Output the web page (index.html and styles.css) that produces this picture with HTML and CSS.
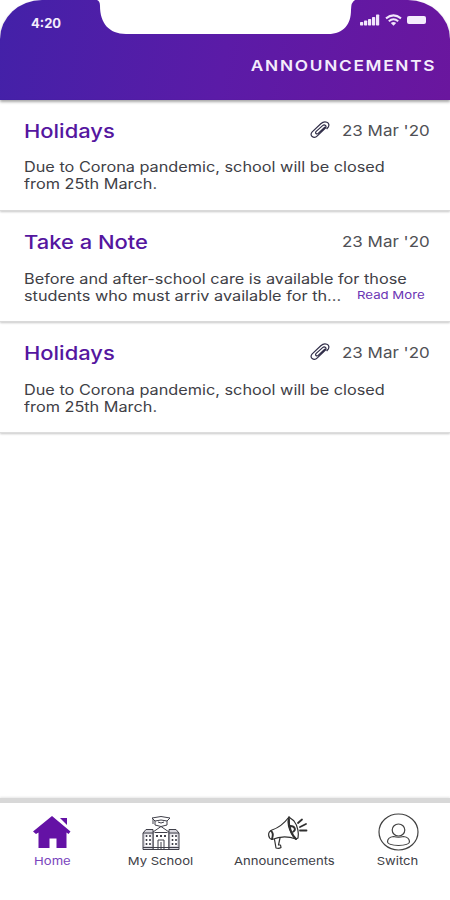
FILE: index.html
```html
<!DOCTYPE html>
<html lang="en">
<head>
  <meta charset="UTF-8">
  <title>Announcements</title>
  <link rel="stylesheet" href="styles.css">
</head>
<body>

  <!-- Header -->
  <header class="header">
    <svg class="notch" width="258" height="34" viewBox="0 0 258 34">
      <path d="M0 0 Q3 1 3 6 C3 23 12 34 29 34 H231 C247 34 254 24 254 10 Q254 2 258 0 Z" fill="#fff"/>
    </svg>
    <div class="status-bar">
      <span class="time">4:20</span>
      <div class="status-icons">
        <svg width="20" height="12" viewBox="0 0 20 12" fill="#f1e6fb">
          <rect x="0" y="8" width="3.2" height="3.5" rx=".7"/>
          <rect x="4" y="6.5" width="3.2" height="5" rx=".7"/>
          <rect x="8" y="5" width="3.2" height="6.5" rx=".7"/>
          <rect x="12" y="3" width="3.2" height="8.5" rx=".7"/>
          <rect x="16" y="0.5" width="3.2" height="11" rx=".7"/>
        </svg>
        <svg width="17" height="12" viewBox="0 0 17 12" fill="none" stroke="#f1e6fb" stroke-width="2">
          <path d="M1 4.4 Q8.5 -1.6 16 4.4"/>
          <path d="M3.8 7.3 Q8.5 3.2 13.2 7.3"/>
          <path d="M5.8 9 Q8.5 6.8 11.2 9 L8.5 11.8 Z" fill="#f1e6fb" stroke="none"/>
        </svg>
        <span class="battery"></span>
      </div>
    </div>
    <h1><span>ANNOUNCEMENTS</span></h1>
  </header>

  <!-- Announcement list -->
  <main>
    <article class="card">
      <div class="card-head">
        <h2>Holidays</h2>
        <svg class="clip" width="20" height="18" viewBox="0 0 20 18">
          <path d="M15 6 L8.2 12.4 C6.6 13.8 4.6 12 6.2 10.4 L12.6 4.6 C14.8 2.8 17.2 5.2 15.2 7.4 L7.6 14.6 C3.8 18.4 -1.2 14.6 2.2 10.8 L10.8 2.8 C14.6 -.8 20.6 1.4 18.4 5.8 L16.6 8"/>
        </svg>
        <span class="date">23 Mar '20</span>
      </div>
      <p><span class="line">Due to Corona pandemic, school will be closed</span><span class="line">from 25th March.</span></p>
    </article>

    <article class="card">
      <div class="card-head">
        <h2>Take a Note</h2>
        <span class="date">23 Mar '20</span>
      </div>
      <p class="low"><span class="line">Before and after-school care is available for those</span><span class="line">students who must arriv available for th...</span></p>
      <a class="read-more">Read More</a>
    </article>

    <article class="card">
      <div class="card-head">
        <h2>Holidays</h2>
        <svg class="clip" width="20" height="18" viewBox="0 0 20 18">
          <path d="M15 6 L8.2 12.4 C6.6 13.8 4.6 12 6.2 10.4 L12.6 4.6 C14.8 2.8 17.2 5.2 15.2 7.4 L7.6 14.6 C3.8 18.4 -1.2 14.6 2.2 10.8 L10.8 2.8 C14.6 -.8 20.6 1.4 18.4 5.8 L16.6 8"/>
        </svg>
        <span class="date">23 Mar '20</span>
      </div>
      <p class="low"><span class="line">Due to Corona pandemic, school will be closed</span><span class="line">from 25th March.</span></p>
    </article>
  </main>

  <!-- Bottom navigation -->
  <nav class="tabs">
    <a class="tab home active">
      <svg width="38" height="34" viewBox="0 0 38 34" fill="#6412a5">
        <path d="M19 0 L37.5 15.500 L35.500 18 L33.500 16.500 V32 H23.500 V22.500 H16.500 V32 H5.500 V16.500 L3 18 L0 15.500 Z"/>
        <path d="M27 2 H34 V9 Z"/>
      </svg>
      <span>Home</span>
    </a>
    <a class="tab school">
      <svg width="38" height="34" viewBox="0 0 38 34" fill="none" stroke="#40404a" stroke-width="1">
        <path d="M10 2 Q19 -1 28 2 L25 5 Q19 3 13 5 Z M13 5 V9 Q19 12 25 9 V5 M16 6 Q19 8 22 6 M11 3 V8"/>
        <path d="M11 16 L19 10.500 L27 16 M11 16 V34 M27 16 V34 M12.500 16.500 H25.500"/>
        <path d="M1 17 L4 13.500 H11 V33.500 H1 Z M27 13.500 H34 L37 17 V33.500 H27 Z" fill="#d8d7de"/>
        <path d="M3 18.500 H9.500 V30 H3 Z M28.500 18.500 H35 V30 H28.500 Z" fill="#fff" stroke="none"/>
        <path d="M1 17 H11 M27 17 H37 M1 31.500 H37 M1 33.500 H37"/>
        <path d="M16 33 V24 H22 V33 M19 26 V33"/>
        <path d="M4.500 19 V30 M8 19 V30 M30.500 19 V30 M34 19 V30" stroke-width="1.600" stroke-dasharray="2 2"/>
        <path d="M14 20 H24" stroke-width="2" stroke-dasharray="2 2"/>
      </svg>
      <span>My School</span>
    </a>
    <a class="tab news">
      <svg width="41" height="34" viewBox="0 0 41 34" fill="none" stroke="#303030" stroke-width="1.200" stroke-linecap="round" stroke-linejoin="round">
        <path d="M22 1 C16 9 11 12 5 14 C0 16 1 22 5 23.500 C12 20.500 21 20 29 23"/>
        <path d="M22 1 C24 3 25 3 27 5 C31 10 32 18 31 22 L29 23 C24 20 19 7 22 1 Z"/>
        <path d="M23.500 10 C28 10 29 14 26.500 15.500 M22 3 C21 10 25 19 29 23 M4 15 C7 17 6 20 5 23" stroke-width="1.900"/>
        <path d="M7.500 23.500 L9 32 Q12 33 14 31.500 L13.500 29 H11.500 L13 22"/>
        <path d="M31 7 L35 3.500 M33 11 L39 8 M33 14.500 L39.500 14.500" stroke-width="1.800"/>
      </svg>
      <span>Announcements</span>
    </a>
    <a class="tab switch">
      <svg width="41" height="38" viewBox="0 0 41 38" fill="none" stroke="#424242" stroke-width="1.200">
        <ellipse cx="20.500" cy="19" rx="19.500" ry="18"/>
        <ellipse cx="20.500" cy="17" rx="6.300" ry="6"/>
        <path d="M15.500 23.500 C11 24 9.500 26 9.500 29 Q10 32 20.500 32.500 Q31 32 31.500 29 C31.500 26 30 24 25.500 23.500 Q20.500 25 15.500 23.500 Z"/>
      </svg>
      <span>Switch</span>
    </a>
  </nav>

</body>
</html>
```
FILE: styles.css
```css
* {
  box-sizing: border-box;
}
body {
  margin: 0;
  height: 900px;
  display: flex;
  flex-direction: column;
  overflow: hidden;
  background: #fff;
  color: #404046;
  font-family: Inter, "Open Sans", sans-serif;
}
h1, h2, p {
  margin: 0;
}

/* header */
.header {
  position: relative;
  height: 100px;
  flex: none;
  border-radius: 42px 42px 0 0 / 39px 39px 0 0;
  background: linear-gradient(100deg, #4321a8, #5b1ba7 50%, #6a169e);
  box-shadow: 0 2px 3px rgba(0, 0, 0, .35);
  color: #f4ecfc;
}
.notch {
  position: absolute;
  left: 97px;
  top: 0;
}
.status-bar {
  display: flex;
  justify-content: space-between;
  padding: 14px 24px 0 31px;
  height: 53px;
}
.time {
  font-size: 13px;
  line-height: 18px;
  font-weight: 700;
}
.status-icons {
  display: flex;
  gap: 5px;
}
.battery {
  width: 19px;
  height: 8px;
  margin-top: 2px;
  border-radius: 2px;
  background: #f4ecfc;
}
h1 {
  padding-right: 15px;
  text-align: right;
  font-size: 15px;
  line-height: 26px;
  font-weight: 600;
}
h1 span {
  display: inline-block;
  letter-spacing: 1.5px;
  margin-right: -1.5px;
  transform: scaleX(1.15);
  transform-origin: right;
}

/* cards */
.card {
  position: relative;
  height: 111px;
  padding: 18px 22px 0 24px;
  border-bottom: 1px solid #ddd;
  box-shadow: 0 1px 2px rgba(0, 0, 0, .22);
}
.card-head {
  display: flex;
  height: 26px;
}
h2 {
  flex: 1;
  color: #55169f;
  font-size: 19px;
  line-height: 27px;
  font-weight: 500;
  transform: scaleX(1.155);
  transform-origin: left;
}
.clip {
  margin: 3px 12px 0 0;
  fill: none;
  stroke: #302d48;
  stroke-width: 1.2;
}
.date {
  width: 86px;
  color: #505055;
  font-size: 15px;
  line-height: 25px;
  font-weight: 400;
  white-space: nowrap;
  transform: scaleX(1.13);
  transform-origin: left;
}
.card p {
  padding-top: 14px;
  font-size: 14px;
  line-height: 17px;
}
.card p.low {
  padding-top: 15px;
}
.line {
  display: block;
  width: fit-content;
  white-space: nowrap;
  transform: scaleX(1.162);
  transform-origin: left;
}
.read-more {
  position: absolute;
  left: 357px;
  top: 76px;
  color: #6b35b4;
  font-size: 11px;
  line-height: 16px;
  white-space: nowrap;
  transform: scaleX(1.2);
  transform-origin: left;
}

/* bottom tabs */
.tabs {
  display: flex;
  height: 102px;
  margin-top: auto;
  border-top: 5px solid #d8d8d8;
  box-shadow: 0 -1px 2px #e8e8e8;
}
.tab {
  display: flex;
  flex-direction: column;
  align-items: center;
  justify-content: space-between;
  height: 66px;
  padding-top: 13px;
  font-size: 11px;
  line-height: 16px;
}
.tab span {
  white-space: nowrap;
  transform: scaleX(1.19);
}
.home { width: 104px; }
.school { width: 113px; }
.news { width: 135px; }
.news svg {
  margin-left: 5px;
}
.switch {
  width: 92px;
  padding-top: 10px;
}
.active {
  color: #7a45bd;
}
```
